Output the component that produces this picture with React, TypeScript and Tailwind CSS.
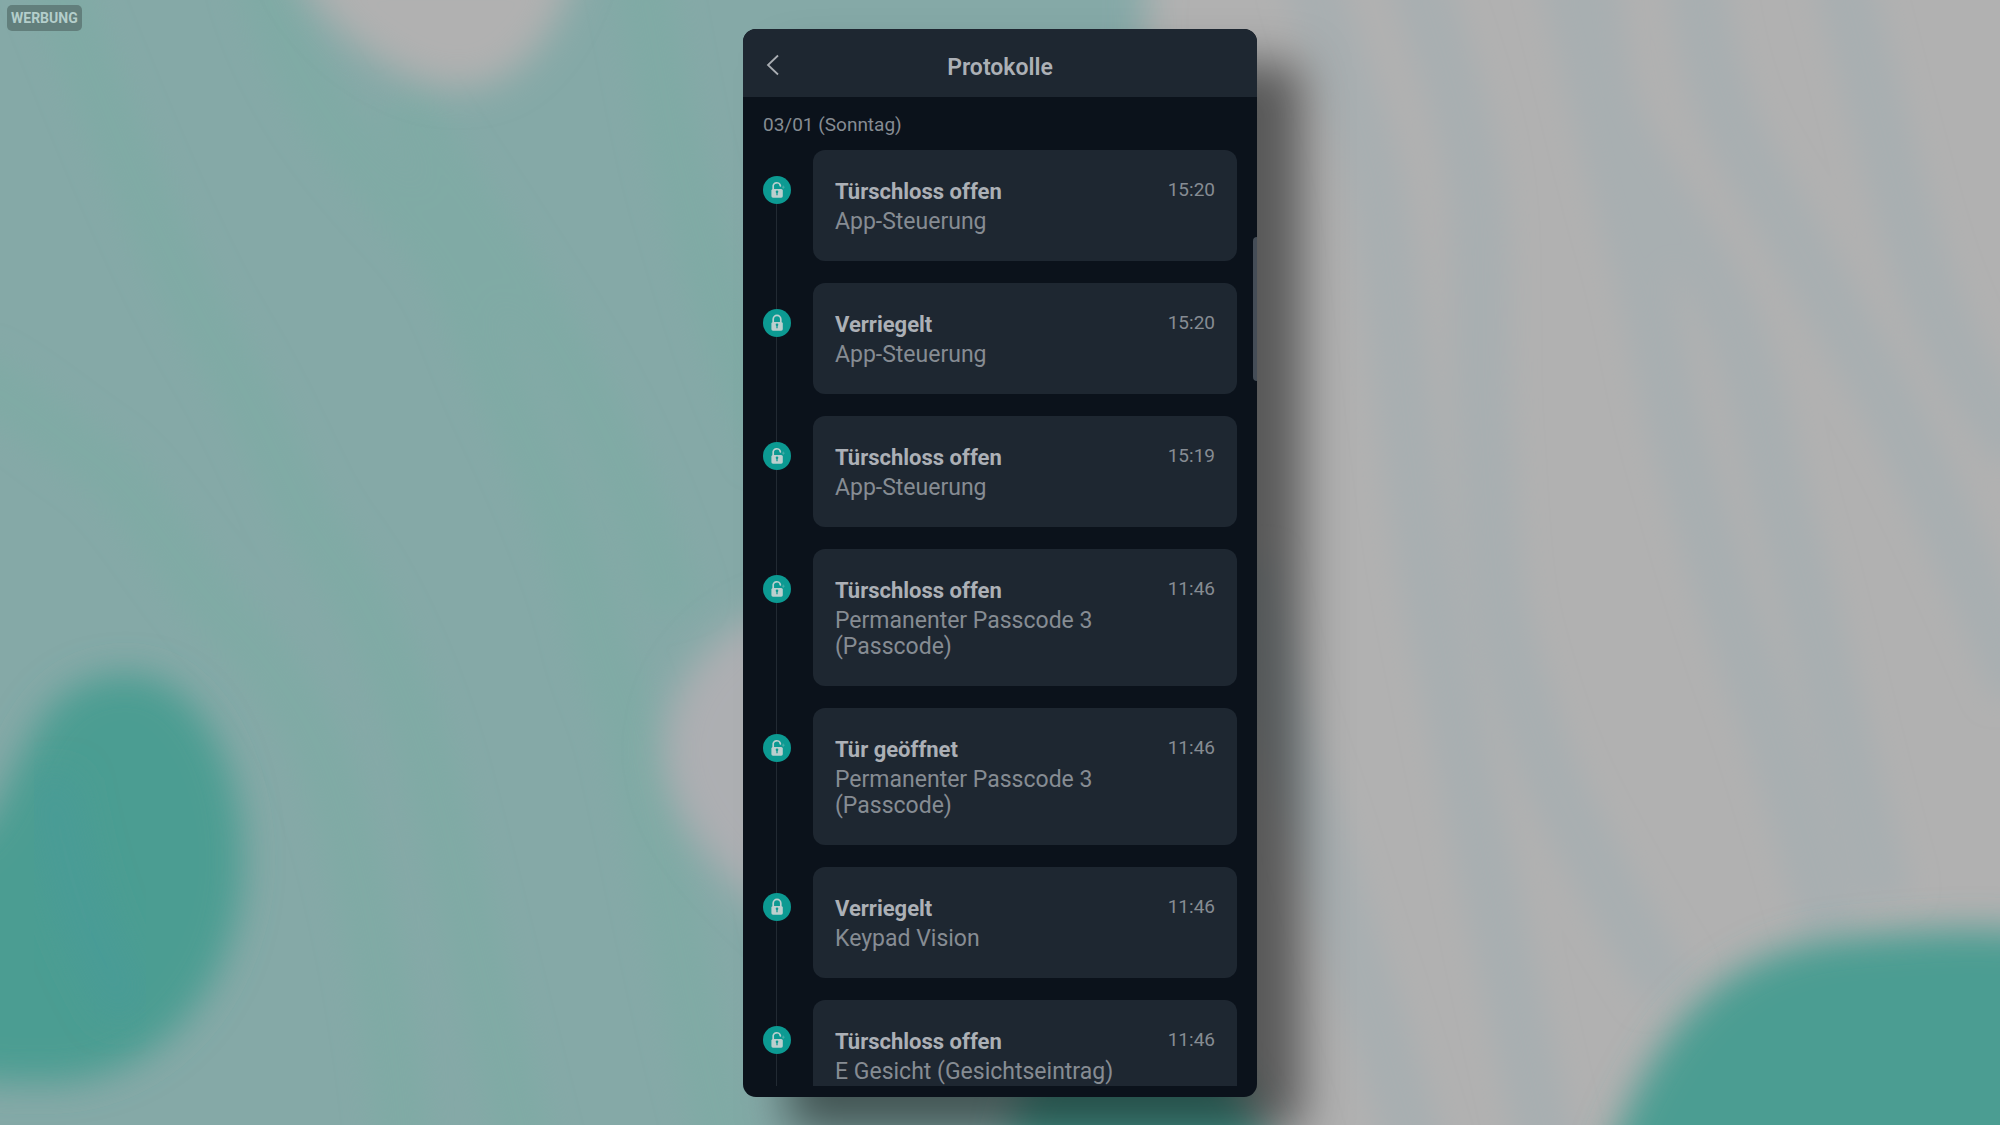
interface LogEntry {
  id: number;
  title: string;
  detail: string;
  time: string;
  locked: boolean;
}

const entries: LogEntry[] = [
  { id: 1, title: "Türschloss offen", detail: "App-Steuerung", time: "15:20", locked: false },
  { id: 2, title: "Verriegelt", detail: "App-Steuerung", time: "15:20", locked: true },
  { id: 3, title: "Türschloss offen", detail: "App-Steuerung", time: "15:19", locked: false },
  { id: 4, title: "Türschloss offen", detail: "Permanenter Passcode 3 (Passcode)", time: "11:46", locked: false },
  { id: 5, title: "Tür geöffnet", detail: "Permanenter Passcode 3 (Passcode)", time: "11:46", locked: false },
  { id: 6, title: "Verriegelt", detail: "Keypad Vision", time: "11:46", locked: true },
  { id: 7, title: "Türschloss offen", detail: "E Gesicht (Gesichtseintrag)", time: "11:46", locked: false },
];

function LockBadge({ locked }: { locked: boolean }) {
  return (
    <svg viewBox="0 0 28 28" className="relative size-7 shrink-0 mt-[26px]" aria-hidden="true">
      <circle cx="14" cy="14" r="14" fill="#0c9a92" />
      {locked ? (
        <path d="M10.2 13.5V10.2a3.8 3.8 0 0 1 7.6 0v3.3" fill="none" stroke="#bccfce" strokeWidth="1.7" />
      ) : (
        <>
          <path d="M10.2 13.5V11a3.6 3.6 0 0 1 7.2-1.2" fill="none" stroke="#bccfce" strokeWidth="1.7" strokeLinecap="round" />
          <path d="M20.3 9.6v3.2M18.9 11.2h2.8" fill="none" stroke="#4fb0aa" strokeWidth="0.8" />
        </>
      )}
      <rect x="8.4" y="12.9" width="11.4" height="8.8" rx="1.6" fill="#bccfce" />
      <path d="M14 19.3v-3.6" stroke="#0c9a92" strokeWidth="1.3" />
      <circle cx="14" cy="15.7" r="1.3" fill="#0c9a92" />
    </svg>
  );
}

function Backdrop() {
  return (
    <svg
      viewBox="0 0 2000 1125"
      preserveAspectRatio="xMidYMid slice"
      className="absolute inset-0 size-full"
      aria-hidden="true"
    >
      <defs>
        <filter id="soft" x="-20%" y="-20%" width="140%" height="140%">
          <feGaussianBlur stdDeviation="18" />
        </filter>
        <filter id="band" x="-20%" y="-20%" width="140%" height="140%">
          <feGaussianBlur stdDeviation="14" />
        </filter>
      </defs>
      <rect width="2000" height="1125" fill="#b1b1b1" />
      <g filter="url(#band)" fill="none" stroke="#a8afb1" strokeWidth="56">
        <path d="M1310-30C1330 50 1365 120 1379 201S1398 350 1408 430S1425 570 1441 646S1500 950 1550 1160" />
        <path d="M1415-30C1440 50 1465 110 1475 179S1478 350 1484 430S1490 580 1508 646S1550 780 1575 825S1630 930 1670 990" />
        <path d="M1565-30C1590 60 1610 160 1633 237S1660 370 1681 445S1725 600 1752 674S1800 820 1830 930" />
        <path d="M1590-30C1600 60 1600 90 1625 140S1710 260 1738 337S1770 470 1791 538S1850 780 1885 900" />
        <path d="M1695-30C1705 50 1720 110 1752 165S1830 300 1872 373S1970 570 2020 690" />
        <path d="M1840-30C1865 60 1895 190 1920 265S1980 400 2020 450" />
        <path d="M1245 560C1265 660 1285 740 1303 789S1340 910 1360 968S1395 1080 1420 1160" />
      </g>
      <path
        d="M-60-60H1148C1140 200 1120 700 1060 1185H-60Z"
        fill="#85a9a7"
        filter="url(#soft)"
      />
      <g filter="url(#band)" fill="none" stroke="#80aaa5" strokeWidth="56">
        <path d="M50-30C90 70 160 250 217 344S290 500 330 552S405 690 425 753S490 1010 530 1160" />
        <path d="M-30 375C20 400 50 430 94 459S180 570 226 617S310 720 330 775S390 980 405 1160" />
        <path d="M260-30C290 80 350 150 410 215S470 320 509 402S580 560 594 617S610 670 627 717S680 980 730 1160" />
        <path d="M400 100C470 210 520 280 566 359S650 530 675 610" />
        <path d="M640-30C660 70 670 140 693 215S740 380 780 450" />
      </g>
      <g filter="url(#soft)">
        <path d="M290-40C320 30 400 88 460 88S560 30 580-40Z" fill="#b1b1b1" />
        <path d="M800 600C710 620 664 690 664 750S710 870 800 945Z" fill="#adafb2" />
        <path
          d="M-50 850C0 830 4 780 30 740C50 696 84 674 128 674C200 674 243 770 243 860C243 980 160 1082 50 1082C0 1082-20 1080-50 1076Z"
          fill="#4b9d92"
        />
        <path d="M1600 1180C1640 1060 1700 950 1850 937S1980 932 2060 932V1180Z" fill="#4b9d92" />
        <path d="M1005 1180C1010 1090 1040 1040 1120 1030S1250 1080 1280 1180Z" fill="#4b9d92" />
      </g>
      <path d="M50 780C70 900 100 960 130 1010" fill="none" stroke="#4a9b96" strokeWidth="44" filter="url(#soft)" />
    </svg>
  );
}

function LogItem({ entry }: { entry: LogEntry }) {
  return (
    <li className="flex items-start gap-[22px]">
      <LockBadge locked={entry.locked} />
      <article className="flex flex-1 items-start rounded-xl bg-[#1e2731] px-[22px] pt-7 pb-[26px]">
        <div className="flex-1 text-[23px]">
          <h2 className="pb-[3px] text-[22px] leading-7 font-bold text-[#acb0b6]">{entry.title}</h2>
          <p className="leading-[26px] text-[#868c93]">{entry.detail}</p>
        </div>
        <time className="text-[19px] leading-6 text-[#868c93]">{entry.time}</time>
      </article>
    </li>
  );
}

export default function App() {
  return (
    <main className="relative flex h-screen justify-center overflow-hidden bg-[#85a9a7] pt-[29px] pb-7 font-['Roboto',sans-serif]">
      <Backdrop />
      <span className="absolute top-[5px] left-[7px] rounded-[5px] bg-[#627f7c] px-1 text-sm leading-[26px] font-bold text-[#b4cecb]">
        WERBUNG
      </span>

      <section className="relative flex w-full max-w-[514px] flex-col overflow-hidden rounded-[13px] bg-[#0b121b] pb-[11px] shadow-[45px_34px_46px_rgba(0,0,0,0.5)]">
        <header className="grid h-[68px] shrink-0 grid-cols-[1fr_auto_1fr] items-center bg-[#1e2731] px-5 pt-1">
          <button type="button" aria-label="Zurück" className="flex h-8 w-8 items-center">
            <svg viewBox="0 0 20 24" className="h-6 w-5" fill="none" stroke="#a9adb2" strokeWidth="1.8">
              <path d="M15 2.5 5 12l10 9.5" />
            </svg>
          </button>
          <h1 className="pt-1.5 text-[23px] leading-8 font-semibold text-[#acb0b6]">Protokolle</h1>
        </header>

        <div className="min-h-0 flex-1 overflow-hidden px-5">
          <p className="pt-3 pb-[9px] text-[19px] leading-8 text-[#868c93]">03/01 (Sonntag)</p>
          <div className="relative">
            <span className="absolute top-10 bottom-0 left-[13px] w-px bg-[#222a33]" />
            <ul className="flex flex-col gap-[22px]">
              {entries.map((entry) => (
                <LogItem key={entry.id} entry={entry} />
              ))}
            </ul>
          </div>
        </div>

        <span className="absolute top-[208px] right-0 h-36 w-1 rounded-l bg-[#454d57]" />
      </section>
    </main>
  );
}
